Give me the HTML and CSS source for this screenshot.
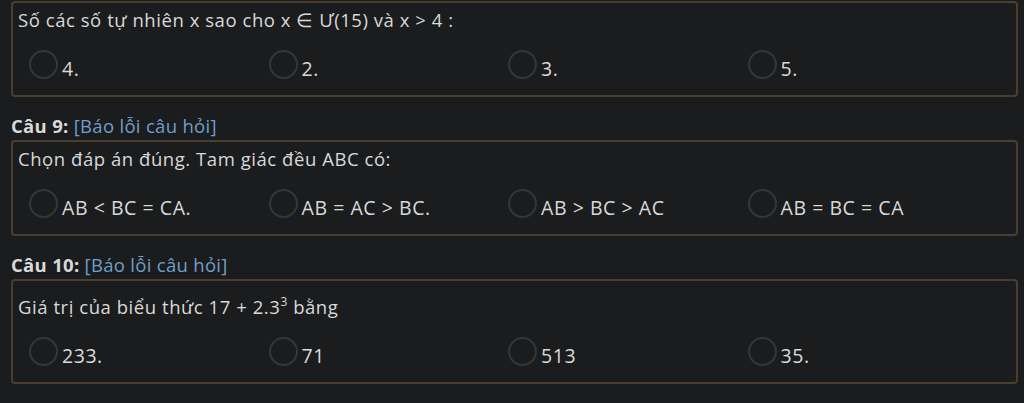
FILE: index.html
```html
<!DOCTYPE html>
<html lang="vi">
<head>
    <meta charset="UTF-8">
    <title>Câu hỏi trắc nghiệm</title>
    <link rel="stylesheet" href="styles.css">
</head>
<body>
    <div class="quiz">
        <!-- CAU 8 -->
        <div class="question-box">
            <div class="question-text">Số các số tự nhiên x sao cho x ∈ Ư(15) và x &gt; 4 :</div>
            <div class="options">
                <label class="option"><span class="radio"></span>4.</label>
                <label class="option"><span class="radio"></span>2.</label>
                <label class="option"><span class="radio"></span>3.</label>
                <label class="option"><span class="radio"></span>5.</label>
            </div>
        </div>

        <!-- CAU 9 -->
        <div class="question-title"><strong>Câu 9:</strong> <a href="#" class="report-link">[Báo lỗi câu hỏi]</a></div>
        <div class="question-box">
            <div class="question-text">Chọn đáp án đúng. Tam giác đều ABC có:</div>
            <div class="options">
                <label class="option"><span class="radio"></span>AB &lt; BC = CA.</label>
                <label class="option"><span class="radio"></span>AB = AC &gt; BC.</label>
                <label class="option"><span class="radio"></span>AB &gt; BC &gt; AC</label>
                <label class="option"><span class="radio"></span>AB = BC = CA</label>
            </div>
        </div>

        <!-- CAU 10 -->
        <div class="question-title"><strong>Câu 10:</strong> <a href="#" class="report-link">[Báo lỗi câu hỏi]</a></div>
        <div class="question-box">
            <div class="question-text tall">Giá trị của biểu thức 17 + 2.3<sup>3</sup> bằng</div>
            <div class="options">
                <label class="option"><span class="radio"></span>233.</label>
                <label class="option"><span class="radio"></span>71</label>
                <label class="option"><span class="radio"></span>513</label>
                <label class="option"><span class="radio"></span>35.</label>
            </div>
        </div>
    </div>
</body>
</html>
```

FILE: styles.css
```css
:root {
    --bg-color: #1b1c1e;
    --border-color: #4a3f2c;
    --text-color: #d9d9d9;
    --link-color: #6f9fc8;
}

body {
    margin: 0;
    background-color: var(--bg-color);
    color: var(--text-color);
    font-family: "Open Sans", "Noto Sans", sans-serif;
    letter-spacing: 0.55px;
}

.quiz {
    padding: 1px 6px 0 11px;
}

/* QUESTION BOX */
.question-box {
    border: 2px solid var(--border-color);
    border-radius: 4px;
    padding: 3px 5px 12px;
}

.question-text {
    font-size: 18.5px;
    line-height: 28px;
}

.question-text.tall {
    padding-top: 9px;
}

.question-text sup {
    font-size: 12px;
    line-height: 0;
    vertical-align: 8px;
}

.question-title {
    margin-top: 17px;
    margin-bottom: 2px;
    font-size: 18.5px;
    line-height: 24px;
    letter-spacing: 0.3px;
}

.question-title strong {
    font-weight: 700;
}

.report-link {
    color: var(--link-color);
    text-decoration: none;
}

/* OPTIONS */
.options {
    display: grid;
    grid-template-columns: repeat(4, 239.5px);
    margin: 19px 0 0 11px;
}

.option {
    display: flex;
    align-items: center;
    font-size: 19.5px;
    height: 30px;
    cursor: pointer;
}

.radio {
    width: 25px;
    height: 25px;
    border: 2px solid #353638;
    border-radius: 50%;
    margin-right: 4px;
    margin-top: -8px;
    flex-shrink: 0;
}
```
